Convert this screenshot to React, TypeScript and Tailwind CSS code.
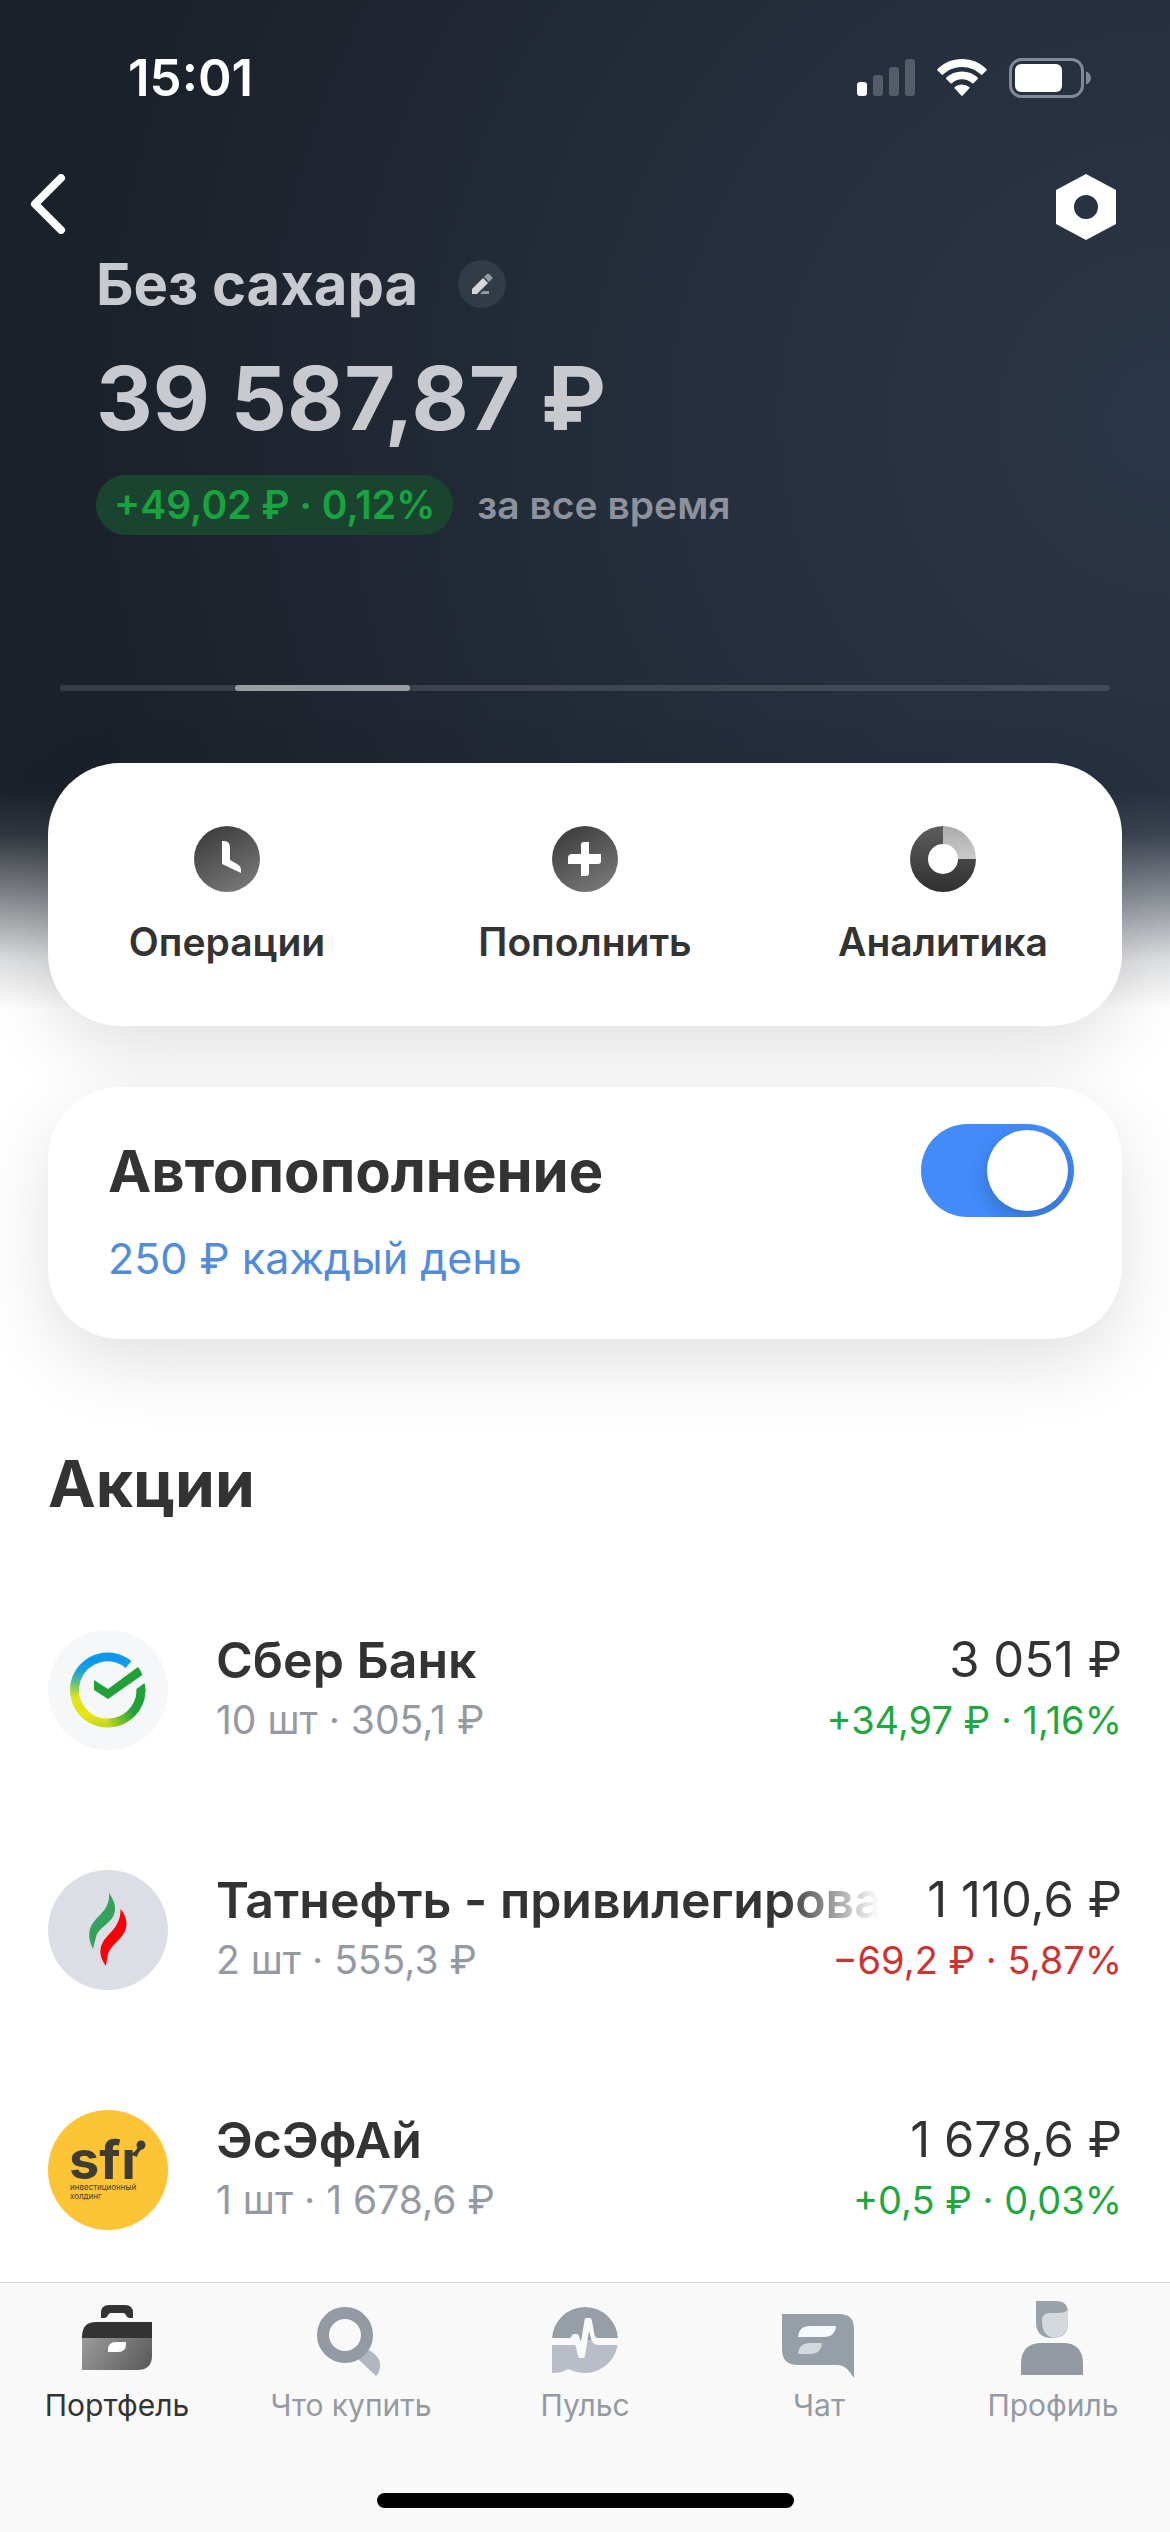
import React, { useState } from 'react';

const stocks = [
    { name: 'Сбер Банк', details: '10 шт · 305,1 ₽', total: '3 051 ₽', change: '+34,97 ₽ · 1,16%', up: true, logo: 'sber' },
    { name: 'Татнефть - привилегирова', details: '2 шт · 555,3 ₽', total: '1 110,6 ₽', change: '−69,2 ₽ · 5,87%', up: false, logo: 'tatneft' },
    { name: 'ЭсЭфАй', details: '1 шт · 1 678,6 ₽', total: '1 678,6 ₽', change: '+0,5 ₽ · 0,03%', up: true, logo: 'sfi' }
];

const StatusIcons = () => (
    <div className="flex items-center gap-[22px]">
        <svg width="58" height="38" viewBox="0 0 58 38" aria-hidden="true">
            <rect x="0" y="23" width="10" height="14" rx="3" fill="#fff" />
            <rect x="16" y="16" width="10" height="21" rx="3" fill="#fff" opacity="0.22" />
            <rect x="32" y="8" width="10" height="29" rx="3" fill="#fff" opacity="0.22" />
            <rect x="48" y="0" width="10" height="37" rx="3" fill="#fff" opacity="0.22" />
        </svg>
        <svg width="50" height="38" viewBox="0 0 50 38" fill="#fff" aria-hidden="true">
            <path d="M25 0C15.500 0 7 3.700 0.600 9.900a1 1 0 0 0 0 1.500l4 4.200a1 1 0 0 0 1.400 0C11 10.800 17.700 8 25 8s14 2.800 19 7.600a1 1 0 0 0 1.400 0l4-4.200a1 1 0 0 0 0-1.500C43 3.700 34.500 0 25 0z" />
            <path d="M25 12.500c-6 0-11.500 2.300-15.700 6.100a1 1 0 0 0 0 1.500l4.200 4.200a1 1 0 0 0 1.300 0A15 15 0 0 1 25 20.300a15 15 0 0 1 10.200 4 1 1 0 0 0 1.300 0l4.200-4.200a1 1 0 0 0 0-1.500A23 23 0 0 0 25 12.500z" />
            <path d="M25 25.500c-2.800 0-5.300 1-7.200 2.600a1 1 0 0 0 0 1.500l6.500 7a1 1 0 0 0 1.400 0l6.500-7a1 1 0 0 0 0-1.500A11 11 0 0 0 25 25.500z" />
        </svg>
        <svg width="82" height="40" viewBox="0 0 82 40" aria-hidden="true">
            <rect x="1.500" y="1.500" width="72" height="37" rx="11" fill="none" stroke="#808995" strokeWidth="3" />
            <rect x="6" y="6" width="47" height="28" rx="6" fill="#fff" />
            <path d="M77 13.500c3 1 5 3.600 5 6.500s-2 5.500-5 6.500z" fill="#808995" />
        </svg>
    </div>
);

const StockLogo = ({ type }: { type: string }) => {
    if (type === 'sber') {
        return (
            <svg className="w-[120px] h-[120px] shrink-0" viewBox="0 0 120 120" fill="none" aria-hidden="true">
                <defs>
                    <linearGradient id="sberLeft" gradientUnits="userSpaceOnUse" x1="50" y1="24" x2="50" y2="96">
                        <stop offset="0.080" stopColor="#0d98ec" />
                        <stop offset="0.240" stopColor="#1ba3dc" />
                        <stop offset="0.400" stopColor="#62bd80" />
                        <stop offset="0.600" stopColor="#dde51c" />
                        <stop offset="0.850" stopColor="#eae416" />
                        <stop offset="1" stopColor="#bfd922" />
                    </linearGradient>
                    <linearGradient id="sberRight" gradientUnits="userSpaceOnUse" x1="58" y1="90" x2="84" y2="78">
                        <stop stopColor="#bfd922" />
                        <stop offset="1" stopColor="#21a038" />
                    </linearGradient>
                </defs>
                <circle cx="60" cy="60" r="60" fill="#f5f7f9" />
                <path d="M80.500 34.500A33 33 0 1 0 60 93" stroke="url(#sberLeft)" strokeWidth="9" />
                <path d="M59.800 93A33 33 0 0 0 93 60" stroke="url(#sberRight)" strokeWidth="9" />
                <path d="M88.500 61v-2l8-6q1 3 1 8z" fill="#21a038" />
                <path d="M46 50l14 9 30-22c2 2.500 3.200 5 4.300 8L60 69 46 60z" fill="#21a038" />
            </svg>
        );
    }
    if (type === 'tatneft') {
        return (
            <svg className="w-[120px] h-[120px] shrink-0" viewBox="0 0 120 120" aria-hidden="true">
                <circle cx="60" cy="60" r="60" fill="#dbdee5" />
                <path d="M61 23c4 6 6.500 11 6 17-1 13-16 16-19 27-1.200 4-2 8-3 12-6-12-5-22 4-31 7-7 13-13 12-25z" fill="#34a25c" />
                <path d="M72.500 39c5 6 7 12 5.500 19-3 12-16 16-18.500 28-.5 3-1 7-1.500 10-6-8-7.500-16-3-24 5-9 18-15 17.500-33z" fill="#fb0007" />
            </svg>
        );
    }
    return (
        <svg className="w-[120px] h-[120px] shrink-0" viewBox="0 0 120 120" fill="#3f3d33" aria-hidden="true">
            <circle cx="60" cy="60" r="60" fill="#fdc435" />
            <text x="21" y="69" fontSize="54" fontWeight="700">sfı</text>
            <circle cx="93" cy="35" r="4.500" />
            <path d="M81 44q6-1 9-7l4 2q-4 3-5 8z" />
            <text x="22" y="80" fontSize="8">инвестиционный</text>
            <text x="22" y="89" fontSize="8">холдинг</text>
        </svg>
    );
};

const tabs = [
    {
        label: 'Портфель',
        active: true,
        icon: (
            <>
                <defs>
                    <linearGradient id="caseBody" x1="0" y1="0.200" x2="1" y2="0.500">
                        <stop stopColor="#989898" />
                        <stop offset="1" stopColor="#5f5f5f" />
                    </linearGradient>
                </defs>
                <path d="M26 20v-5q0-8 8-8h16q8 0 8 8v5h-3q-3 0-4-3-1-2-3-2H36q-2 0-3 2-1 3-4 3z" fill="#333" />
                <path d="M7 41v-2Q7 24 21 24h56v17z" fill="#333" />
                <path d="M7 40h70v18q0 14-15 14H7z" fill="url(#caseBody)" />
                <path d="M33 54v-2q0-8 8-8h10v2q0 8-8 8z" fill="#fff" />
            </>
        )
    },
    {
        label: 'Что купить',
        active: false,
        icon: (
            <>
                <path d="M49 61l11-9c8 5 12 10 11 17q-.500 6-4 9z" fill="#b1b6c0" />
                <circle cx="36" cy="37" r="22" fill="none" stroke="#939aa4" strokeWidth="12" />
            </>
        )
    },
    {
        label: 'Пульс',
        active: false,
        icon: (
            <>
                <path d="M9 42a33 33 0 0 1 66 0z" fill="#969ea8" />
                <path d="M9 42h66a33 33 0 0 1-33 33c-6 0-12-2-17-4-5 3-10 4-16 4z" fill="#b9bdc7" />
                <path d="M8 40h18.500q1.500 0 2-2t3-2h2q2 0 2.500 2l2 6 3.500-22q.300-2 2-2H47q1.500 0 1.800 2l2.500 14q.700 4 4 4H76v7H56q-6 0-7.500-5L46 33l-4 25q-.300 2-2 2h-3q-1.500 0-2-2L33 49q-.500-2-2.500-2H8z" fill="#f9f9f9" />
            </>
        )
    },
    {
        label: 'Чат',
        active: false,
        icon: (
            <>
                <path d="M5 16h57q15 0 15 15v49q-3-5-7-9t-10-4H21Q5 67 5 51z" fill="#969ea8" />
                <path d="M21 39q1-11 12-11h26q-1 11-12 11z" fill="#f6f8fc" />
                <path d="M21 56q1-11 12-11h12q-1 11-12 11z" fill="#d3d8dd" />
            </>
        )
    },
    {
        label: 'Профиль',
        active: false,
        icon: (
            <>
                <path d="M25 3h20q12 0 12 12v10q0 15-16 15T25 24z" fill="#99a1aa" />
                <path d="M57 12v13q0 13-14 15c-9-1-12-9-12-17q0-8 8-8h7q8 0 11-3z" fill="#d5d9dd" />
                <path d="M10 77V66q0-21 21-21h21q20 0 20 21v11z" fill="#939aa4" />
            </>
        )
    }
];

const PortfolioPage = () => {
    const [autoTopUp, setAutoTopUp] = useState(true);

    return (
        <div className="min-h-screen flex flex-col font-['Inter','Noto_Sans',sans-serif] text-[#333333] bg-white bg-[linear-gradient(to_bottom,transparent_790px,rgba(255,255,255,0.1)_835px,rgba(255,255,255,0.45)_895px,rgba(255,255,255,0.85)_960px,white_1010px),radial-gradient(circle_at_100%_420px,#2b3648,#252e3c_500px,#1b212a_1100px)]">
            {/* Status Bar */}
            <div className="flex items-center justify-between h-24 mt-[30px] pl-32 pr-[79px]">
                <span className="text-[51px] leading-[60px] font-semibold text-white">15:01</span>
                <StatusIcons />
            </div>

            {/* Navigation */}
            <div className="flex items-start justify-between mt-12 pl-[30px] pr-[54px]">
                <button aria-label="Назад">
                    <svg width="36" height="60" viewBox="0 0 36 60" fill="none" aria-hidden="true">
                        <path d="M31 4L5 30l26 26" stroke="#fff" strokeWidth="8" strokeLinecap="round" strokeLinejoin="round" />
                    </svg>
                </button>
                <button aria-label="Настройки">
                    <svg width="60" height="66" viewBox="0 0 60 66" aria-hidden="true">
                        <path fillRule="evenodd" d="M30 0l30 16v34L30 66 0 50V16zM30 21a12 12 0 1 0 0 24 12 12 0 0 0 0-24z" fill="#fff" />
                    </svg>
                </button>
            </div>

            {/* Account Summary */}
            <header className="px-24 mt-[14px] text-[#c9cacf]">
                <div className="flex items-center gap-10">
                    <h1 className="text-[58px] leading-[60px] font-bold">Без сахара</h1>
                    <button aria-label="Переименовать" className="w-12 h-12 rounded-full bg-[#323c47] flex items-center justify-center">
                        <svg width="24" height="24" viewBox="0 0 24 24" aria-hidden="true">
                            <path d="M2 22v-5L13 6l5 5L7 22z" fill="#d6d7da" />
                            <path d="M14 5l3-3q1-1 2 0l3 3q1 1 0 2l-3 3z" fill="#94999f" />
                            <path d="M10 22l3-3h6v3z" fill="#94999f" />
                        </svg>
                    </button>
                </div>
                <p className="mt-9 text-[88px] leading-[96px] font-bold">39 587,87 ₽</p>
                <div className="flex items-center gap-6 mt-[29px] text-[39px] leading-[60px] font-semibold">
                    <span className="px-[18px] rounded-full bg-[#1a4430] text-[#18a33f]">+49,02 ₽ · 0,12%</span>
                    <span className="text-[#8d929c]">за все время</span>
                </div>
            </header>

            {/* Pager */}
            <div className="mx-[60px] mt-[150px] grid grid-cols-6 h-[6px] rounded-full bg-white/12">
                <div className="col-start-2 rounded-full bg-[#999ca1]"></div>
            </div>

            <main className="px-12 pb-[52px]">
                {/* Quick Actions */}
                <div className="mt-[72px] bg-white rounded-[72px] pt-[63px] pb-[60px] grid grid-cols-3 shadow-[0_24px_72px_rgba(0,0,0,0.12)]">
                    <button className="flex flex-col items-center">
                        <svg width="66" height="66" viewBox="0 0 66 66" aria-hidden="true">
                            <defs>
                                <linearGradient id="darkRound" x1="0.200" y1="0.100" x2="0.700" y2="1">
                                    <stop stopColor="#404040" />
                                    <stop offset="1" stopColor="#777" />
                                </linearGradient>
                            </defs>
                            <circle cx="33" cy="33" r="33" fill="url(#darkRound)" />
                            <path d="M28 15h2q6 0 6 7v12l7 4q4 2 4 6v3L28 38z" fill="#fff" />
                        </svg>
                        <span className="mt-[26px] text-[39px] leading-[48px] font-semibold">Операции</span>
                    </button>
                    <button className="flex flex-col items-center">
                        <svg width="66" height="66" viewBox="0 0 66 66" aria-hidden="true">
                            <circle cx="33" cy="33" r="33" fill="url(#darkRound)" />
                            <path d="M29 19q0-3 3-3h5v12h12v7q0 3-3 3h-9v9q0 3-3 3h-5V38H16v-6q0-4 4-4h9z" fill="#fff" />
                        </svg>
                        <span className="mt-[26px] text-[39px] leading-[48px] font-semibold">Пополнить</span>
                    </button>
                    <button className="flex flex-col items-center">
                        <svg width="66" height="66" viewBox="0 0 66 66" fill="none" aria-hidden="true">
                            <defs>
                                <linearGradient id="ringDark" x1="0" y1="0" x2="0" y2="1">
                                    <stop stopColor="#5d5d5d" />
                                    <stop offset="1" stopColor="#303030" />
                                </linearGradient>
                                <linearGradient id="ringLight" x1="0" y1="0" x2="0" y2="1">
                                    <stop stopColor="#ababab" />
                                    <stop offset="1" stopColor="#cacaca" />
                                </linearGradient>
                            </defs>
                            <path d="M33 0a33 33 0 1 0 33 33H48a15 15 0 1 1-15-15z" fill="url(#ringDark)" />
                            <path d="M33 0a33 33 0 0 1 33 33H48a15 15 0 0 0-15-15z" fill="url(#ringLight)" />
                        </svg>
                        <span className="mt-[26px] text-[39px] leading-[48px] font-semibold">Аналитика</span>
                    </button>
                </div>

                {/* Auto Top-up */}
                <div className="mt-[61px] bg-white rounded-[72px] pt-[37px] pb-[53px] pl-[60px] pr-12 shadow-[0_24px_72px_rgba(0,0,0,0.12)]">
                    <div className="flex items-center justify-between">
                        <label htmlFor="auto-top-up" className="text-[58px] leading-[72px] font-bold">Автопополнение</label>
                        <input
                            id="auto-top-up"
                            type="checkbox"
                            role="switch"
                            checked={autoTopUp}
                            onChange={(e) => setAutoTopUp(e.target.checked)}
                            className="appearance-none flex items-center w-[153px] h-[93px] px-[6px] rounded-full bg-gray-300 checked:bg-[#428bf9] checked:justify-end before:block before:w-[81px] before:h-[81px] before:rounded-full before:bg-white before:shadow-[0_8px_20px_rgba(0,0,0,0.2)] overflow-hidden"
                        />
                    </div>
                    <p className="mt-[13px] text-[43px] leading-[56px] text-[#528bdb]">250 ₽ каждый день</p>
                </div>

                {/* Stocks */}
                <h2 className="mt-[105px] text-[64px] leading-[80px] font-bold">Акции</h2>
                <ul className="mt-[106px] space-y-[120px]">
                    {stocks.map((stock) => (
                        <li key={stock.name} className="flex items-center">
                            <StockLogo type={stock.logo} />
                            <div className="flex-1 min-w-0 ml-12 leading-[60px]">
                                <div className="flex justify-between gap-12 text-[50px]">
                                    <h3 className="min-w-0 flex-1 overflow-hidden whitespace-nowrap font-semibold [mask-image:linear-gradient(to_right,black_calc(100%-96px),transparent)]">{stock.name}</h3>
                                    <span className="whitespace-nowrap text-[49px]">{stock.total}</span>
                                </div>
                                <div className="flex justify-between">
                                    <span className="text-[39px] text-[#959aa2]">{stock.details}</span>
                                    <span className={`text-[38px] ${stock.up ? 'text-[#1fa83f]' : 'text-[#cf3232]'}`}>{stock.change}</span>
                                </div>
                            </div>
                        </li>
                    ))}
                </ul>
            </main>

            {/* Tab Bar */}
            <nav className="sticky bottom-0 mt-auto bg-[#f9f9f9] border-t border-[#d8d8d8] pt-[15px] pb-6">
                <div className="grid grid-cols-5">
                    {tabs.map((tab) => (
                        <a key={tab.label} href="#" className={`flex flex-col items-center text-[30px] leading-[36px] ${tab.active ? 'text-[#333333]' : 'text-[#959aa2]'}`}>
                            <svg width="84" height="84" viewBox="0 0 84 84" aria-hidden="true">{tab.icon}</svg>
                            <span className="mt-[5px]">{tab.label}</span>
                        </a>
                    ))}
                </div>
                <div className="mx-auto mt-[70px] w-[417px] h-[15px] rounded-full bg-black"></div>
            </nav>
        </div>
    );
};

export default PortfolioPage;
